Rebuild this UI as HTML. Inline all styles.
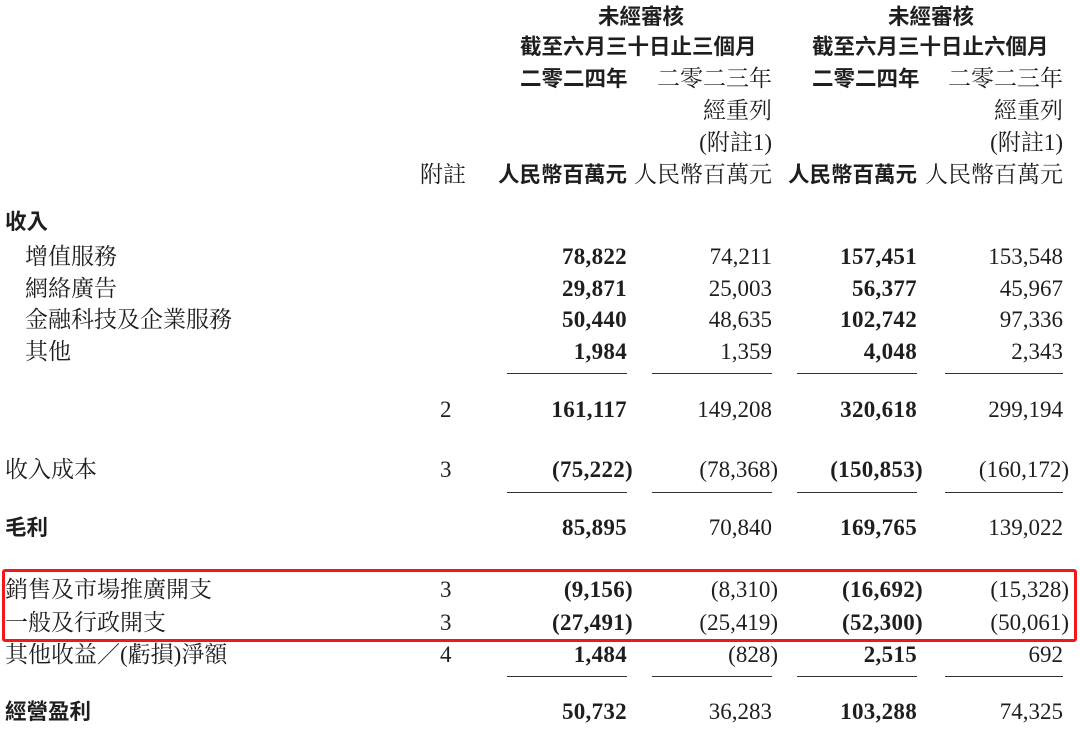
<!DOCTYPE html>
<html><head><meta charset="utf-8"><style>
body{margin:0;width:1080px;height:736px;background:#fff;position:relative;overflow:hidden;color:#1e1e1e;
font-family:"Liberation Serif","Noto Serif CJK SC",serif;font-size:23px}
.r{position:absolute;left:0;width:1080px;height:32px;line-height:32px}
.r span{position:absolute;white-space:nowrap}
.c1{right:453px;text-align:right}.c2{right:308px}.c3{right:163px}.c4{right:17px}
.b{font-weight:bold;letter-spacing:0.3px}
.p{margin-right:-6px}
.n{left:440px}
.h{font-family:"Liberation Sans","Noto Sans CJK TC",sans-serif;font-weight:bold;font-size:21.5px;letter-spacing:0}
.l{left:25px}.l0{left:5px}
.u{position:absolute;height:1px;background:#333}
</style></head><body>
<div class="r" style="top:1px"><span class="h" style="left:598px">未經審核</span><span class="h" style="left:888px">未經審核</span></div>
<div class="r" style="top:31px"><span class="h" style="left:520px">截至六月三十日止三個月</span><span class="h" style="left:812px">截至六月三十日止六個月</span></div>
<div class="r" style="top:63px"><span class="h" style="left:520px">二零二四年</span><span class="c2">二零二三年</span><span class="h" style="left:812px">二零二四年</span><span class="c4">二零二三年</span></div>
<div class="r" style="top:95px"><span class="c2">經重列</span><span class="c4">經重列</span></div>
<div class="r" style="top:127px"><span class="c2">(附註1)</span><span class="c4">(附註1)</span></div>
<div class="r" style="top:159px"><span style="left:420px">附註</span><span class="h c1">人民幣百萬元</span><span class="c2">人民幣百萬元</span><span class="h c3">人民幣百萬元</span><span class="c4">人民幣百萬元</span></div>

<div class="r" style="top:206px"><span class="h l0">收入</span></div>
<div class="r" style="top:241px"><span class="l">增值服務</span><span class="c1 b">78,822</span><span class="c2">74,211</span><span class="c3 b">157,451</span><span class="c4">153,548</span></div>
<div class="r" style="top:273px"><span class="l">網絡廣告</span><span class="c1 b">29,871</span><span class="c2">25,003</span><span class="c3 b">56,377</span><span class="c4">45,967</span></div>
<div class="r" style="top:304px"><span class="l">金融科技及企業服務</span><span class="c1 b">50,440</span><span class="c2">48,635</span><span class="c3 b">102,742</span><span class="c4">97,336</span></div>
<div class="r" style="top:336px"><span class="l">其他</span><span class="c1 b">1,984</span><span class="c2">1,359</span><span class="c3 b">4,048</span><span class="c4">2,343</span></div>
<div class="u" style="top:373px;left:507px;width:120px"></div><div class="u" style="top:373px;left:652px;width:120px"></div><div class="u" style="top:373px;left:797px;width:120px"></div><div class="u" style="top:373px;left:945px;width:118px"></div>
<div class="r" style="top:394px"><span class="n">2</span><span class="c1 b">161,117</span><span class="c2">149,208</span><span class="c3 b">320,618</span><span class="c4">299,194</span></div>
<div class="r" style="top:454px"><span class="l0">收入成本</span><span class="n">3</span><span class="c1 b p">(75,222)</span><span class="c2 p">(78,368)</span><span class="c3 b p">(150,853)</span><span class="c4 p">(160,172)</span></div>
<div class="u" style="top:492px;left:507px;width:120px"></div><div class="u" style="top:492px;left:652px;width:120px"></div><div class="u" style="top:492px;left:797px;width:120px"></div><div class="u" style="top:492px;left:945px;width:118px"></div>
<div class="r" style="top:512px"><span class="h l0">毛利</span><span class="c1 b">85,895</span><span class="c2">70,840</span><span class="c3 b">169,765</span><span class="c4">139,022</span></div>
<div style="position:absolute;left:2px;top:569px;width:1069px;height:67px;border:3px solid #f01818;border-radius:3px"></div>
<div class="r" style="top:574px"><span class="l0">銷售及市場推廣開支</span><span class="n">3</span><span class="c1 b p">(9,156)</span><span class="c2 p">(8,310)</span><span class="c3 b p">(16,692)</span><span class="c4 p">(15,328)</span></div>
<div class="r" style="top:607px"><span class="l0">一般及行政開支</span><span class="n">3</span><span class="c1 b p">(27,491)</span><span class="c2 p">(25,419)</span><span class="c3 b p">(52,300)</span><span class="c4 p">(50,061)</span></div>
<div class="r" style="top:639px"><span class="l0">其他收益／(虧損)淨額</span><span class="n">4</span><span class="c1 b">1,484</span><span class="c2 p">(828)</span><span class="c3 b">2,515</span><span class="c4">692</span></div>
<div class="u" style="top:676px;left:507px;width:120px"></div><div class="u" style="top:676px;left:652px;width:120px"></div><div class="u" style="top:676px;left:797px;width:120px"></div><div class="u" style="top:676px;left:945px;width:118px"></div>
<div class="r" style="top:696px"><span class="h l0">經營盈利</span><span class="c1 b">50,732</span><span class="c2">36,283</span><span class="c3 b">103,288</span><span class="c4">74,325</span></div>
</body></html>
